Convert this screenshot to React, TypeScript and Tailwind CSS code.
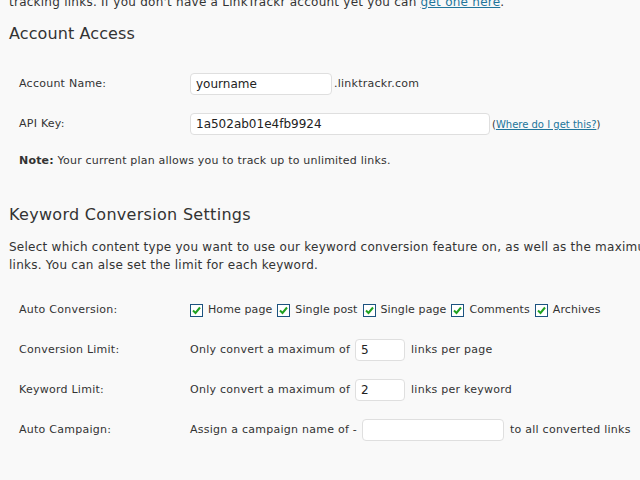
const font = "font-['DejaVu_Sans',Verdana,sans-serif]"

function Check({ label }: { label: string }) {
  return (
    <span className="inline-flex items-center">
      <span className="w-[13px] h-[13px] border border-[#1c5380] bg-white flex items-center justify-center">
        <svg width="9" height="9" viewBox="0 0 9 9">
          <path d="M1 4.5 L3.5 7 L8 1.5" stroke="#21a121" strokeWidth="2" fill="none" />
        </svg>
      </span>
      <span className="ml-[5px]">{label}</span>
    </span>
  )
}

function Row({ label, children }: { label: string; children: React.ReactNode }) {
  return (
    <div className="h-10 flex items-center text-[11px] tracking-[0.25px]">
      <div className="w-[181px] pl-[10px]">{label}</div>
      <div className="flex items-center">{children}</div>
    </div>
  )
}

const input = 'h-[22px] bg-white border border-[#dfdfdf] rounded-[4px] px-[5px] text-[12px] tracking-normal text-[#222] outline-none'

export default function App() {
  return (
    <div className={`min-h-screen h-[480px] overflow-hidden bg-[#f9f9f9] text-[#333] pl-[9px] ${font}`}>
      <p className="text-[12px] leading-[18px] -mt-[7px] tracking-[0.25px] whitespace-nowrap">
        tracking links. If you don't have a LinkTrackr account yet you can{' '}
        <a className="text-[#21759b] underline">get one here</a>.
      </p>
      <h3 className="mt-[13px] text-[16px] leading-5 tracking-[0.1px] text-[#333]">Account Access</h3>

      <div className="mt-5">
        <Row label="Account Name:">
          <input className={`${input} w-[142px]`} defaultValue="yourname" />
          <span className="ml-[2px]">.linktrackr.com</span>
        </Row>
        <Row label="API Key:">
          <input className={`${input} w-[300px]`} defaultValue="1a502ab01e4fb9924" />
          <span className="ml-[2px] text-[10px] tracking-normal">
            (<a className="text-[#21759b] underline">Where do I get this?</a>)
          </span>
        </Row>
      </div>
      <p className="mt-2 pl-[10px] text-[11px] leading-[18px] tracking-[0.2px]">
        <b>Note:</b> Your current plan allows you to track up to unlimited links.
      </p>

      <h3 className="mt-[35px] text-[16px] leading-5 tracking-[0.3px]">Keyword Conversion Settings</h3>
      <p className="mt-[13px] text-[12px] leading-[18px] tracking-[0.25px] whitespace-nowrap">
        Select which content type you want to use our keyword conversion feature on, as well as the maximum number of
        <br />
        links. You can alse set the limit for each keyword.
      </p>

      <div className="mt-4">
        <Row label="Auto Conversion:">
          <div className="flex items-center gap-[5px] tracking-[0.1px]">
            <Check label="Home page" />
            <Check label="Single post" />
            <Check label="Single page" />
            <Check label="Comments" />
            <Check label="Archives" />
          </div>
        </Row>
        <Row label="Conversion Limit:">
          <span>Only convert a maximum of</span>
          <input className={`${input} w-[50px] ml-[5px]`} defaultValue="5" />
          <span className="ml-[6px]">links per page</span>
        </Row>
        <Row label="Keyword Limit:">
          <span>Only convert a maximum of</span>
          <input className={`${input} w-[50px] ml-[5px]`} defaultValue="2" />
          <span className="ml-[6px]">links per keyword</span>
        </Row>
        <Row label="Auto Campaign:">
          <span>Assign a campaign name of -</span>
          <input className={`${input} w-[142px] ml-[5px]`} defaultValue="" />
          <span className="ml-[6px]">to all converted links</span>
        </Row>
      </div>
    </div>
  )
}
